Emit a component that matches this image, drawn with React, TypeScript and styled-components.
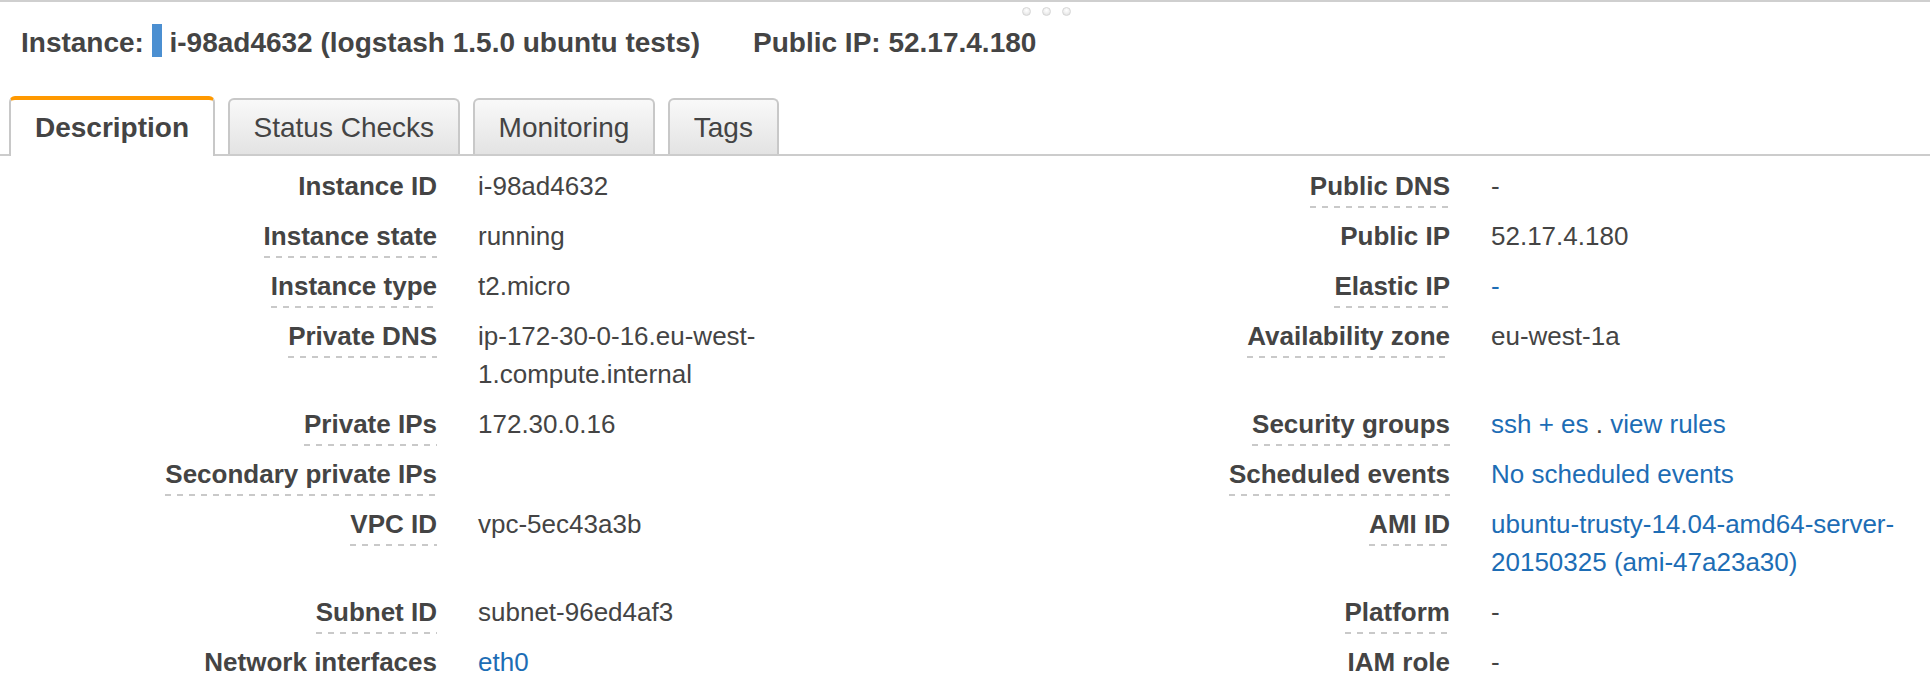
import React from 'react'
import styled, { createGlobalStyle, css } from 'styled-components'

type Field = {
  label: string
  dashed?: boolean
  value?: React.ReactNode
}

const GlobalStyle = createGlobalStyle`
  html, body {
    margin: 0;
    padding: 0;
    overflow: hidden;
    background: #fff;
  }
  body {
    font-family: 'Liberation Sans', Helvetica, Arial, sans-serif;
    color: #444;
  }
`

const rows: [Field, Field][] = [
  [
    { label: 'Instance ID', value: 'i-98ad4632' },
    { label: 'Public DNS', dashed: true, value: '-' },
  ],
  [
    { label: 'Instance state', dashed: true, value: 'running' },
    { label: 'Public IP', value: '52.17.4.180' },
  ],
  [
    { label: 'Instance type', dashed: true, value: 't2.micro' },
    { label: 'Elastic IP', dashed: true, value: <Link href="#">-</Link> },
  ],
  [
    { label: 'Private DNS', dashed: true, value: 'ip-172-30-0-16.eu-west-1.compute.internal' },
    { label: 'Availability zone', dashed: true, value: 'eu-west-1a' },
  ],
  [
    { label: 'Private IPs', dashed: true, value: '172.30.0.16' },
    {
      label: 'Security groups',
      dashed: true,
      value: (
        <>
          <Link href="#">ssh + es</Link> . <Link href="#">view rules</Link>
        </>
      ),
    },
  ],
  [
    { label: 'Secondary private IPs', dashed: true },
    { label: 'Scheduled events', dashed: true, value: <Link href="#">No scheduled events</Link> },
  ],
  [
    { label: 'VPC ID', dashed: true, value: 'vpc-5ec43a3b' },
    {
      label: 'AMI ID',
      dashed: true,
      value: <Link href="#">ubuntu-trusty-14.04-amd64-server-20150325 (ami-47a23a30)</Link>,
    },
  ],
  [
    { label: 'Subnet ID', dashed: true, value: 'subnet-96ed4af3' },
    { label: 'Platform', dashed: true, value: '-' },
  ],
  [
    { label: 'Network interfaces', dashed: true, value: <Link href="#">eth0</Link> },
    { label: 'IAM role', dashed: true, value: '-' },
  ],
]

const tabs = ['Description', 'Status Checks', 'Monitoring', 'Tags']

export default function App() {
  return (
    <Page>
      <GlobalStyle />
      <Grip>
        <Dot />
        <Dot />
        <Dot />
      </Grip>
      <Header>
        Instance: <Marker /> i-98ad4632 (logstash 1.5.0 ubuntu tests)
        <PublicIp>Public IP: 52.17.4.180</PublicIp>
      </Header>
      <TabBar>
        {tabs.map((t, i) => (
          <Tab key={t} $active={i === 0}>
            {t}
          </Tab>
        ))}
      </TabBar>
      <Details>
        {rows.map(([left, right]) => (
          <React.Fragment key={left.label}>
            <Label>
              <LabelText $dashed={left.dashed}>{left.label}</LabelText>
            </Label>
            <Value>{left.value}</Value>
            <Label>
              <LabelText $dashed={right.dashed}>{right.label}</LabelText>
            </Label>
            <Value>{right.value}</Value>
          </React.Fragment>
        ))}
      </Details>
    </Page>
  )
}

function Link(props: React.AnchorHTMLAttributes<HTMLAnchorElement>) {
  return <LinkText {...props} onClick={(e) => e.preventDefault()} />
}

const Page = styled.div`
  position: relative;
  width: 1930px;
  border-top: 2px solid #cfcfcf;
`

const Grip = styled.div`
  position: absolute;
  top: 5px;
  left: 1022px;
  display: flex;
  gap: 11px;
`

const Dot = styled.span`
  width: 9px;
  height: 9px;
  border-radius: 50%;
  box-sizing: border-box;
  border: 1px solid #d6d6d6;
  background: radial-gradient(circle at 50% 35%, #ffffff 0, #f1f1f1 45%, #dcdcdc 100%);
`

const Header = styled.h1`
  margin: 0;
  padding: 22px 0 0 21px;
  height: 36px;
  font-size: 28px;
  line-height: 36px;
  font-weight: bold;
  color: #444;
  white-space: nowrap;
`

const Marker = styled.span`
  display: inline-block;
  width: 10px;
  height: 33px;
  background: #4b8fd1;
  vertical-align: -5px;
`

const PublicIp = styled.span`
  margin-left: 53px;
`

const TabBar = styled.div`
  display: flex;
  align-items: flex-end;
  gap: 12.5px;
  height: 58px;
  margin-top: 36px;
  padding-left: 9px;
  border-bottom: 2px solid #cccccc;
`

const Tab = styled.div<{ $active?: boolean }>`
  box-sizing: border-box;
  padding: 0 24px;
  font-size: 28px;
  line-height: 56px;
  color: #444;
  border: 2px solid #c8c8c8;
  border-bottom: none;
  border-radius: 6px 6px 0 0;
  height: 56px;
  background: linear-gradient(to bottom, #f9f9f9, #e3e3e3);
  cursor: pointer;

  ${(p) =>
    p.$active &&
    css`
      height: 60px;
      margin-bottom: -2px;
      font-weight: bold;
      background: #fff;
      border-top: 4px solid #ff9900;
    `}
`

const Details = styled.div`
  display: grid;
  grid-template-columns: 457px 503px 510px 1fr;
  margin-top: 5px;
  font-size: 26px;
  line-height: 38px;
`

const Label = styled.div`
  padding: 6px 20px 6px 0;
  text-align: right;
  font-weight: bold;
  color: #444;
  white-space: nowrap;
`

const LabelText = styled.span<{ $dashed?: boolean }>`
  padding-bottom: 7px;
  ${(p) =>
    p.$dashed &&
    css`
      background: repeating-linear-gradient(90deg, #c9c9c9 0 6px, transparent 6px 12px) left bottom / 100% 2px
        no-repeat;
    `}
`

const Value = styled.div`
  padding: 6px 16px 6px 21px;
  color: #444;
`

const LinkText = styled.a`
  color: #1d6db5;
  text-decoration: none;
`
